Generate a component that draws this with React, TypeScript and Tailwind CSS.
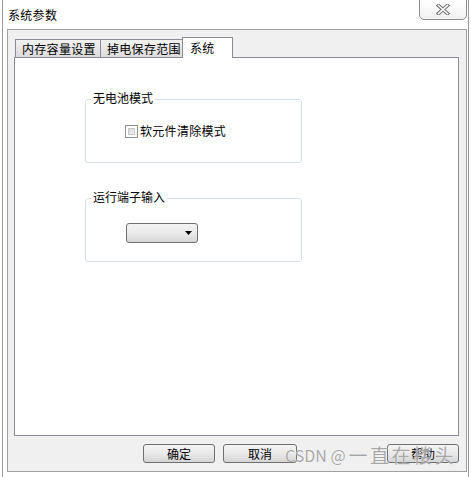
import React from "react";

const font = { fontFamily: '"Noto Sans CJK SC", "Liberation Sans", sans-serif' };

function CloseGlyph() {
  return (
    <svg width="14" height="11" viewBox="0 0 14 11">
      <path d="M2.5 1.5 L11.5 9.5 M11.5 1.5 L2.5 9.5" stroke="#6d6d6d" strokeWidth="3.6" strokeLinecap="square" fill="none" />
      <path d="M2.5 1.5 L11.5 9.5 M11.5 1.5 L2.5 9.5" stroke="#ffffff" strokeWidth="1.6" strokeLinecap="square" fill="none" />
    </svg>
  );
}

function Tab({ label, active, w }: { label: string; active?: boolean; w: string }) {
  if (active) {
    return (
      <div className={`${w} h-[21px] -mb-px relative z-10 border border-b-0 border-[#898c95] bg-white pl-[7px] pt-[1px] leading-[18px]`}>
        {label}
      </div>
    );
  }
  return (
    <div className={`${w} h-[18px] border border-b-0 border-[#898c95] bg-gradient-to-b from-[#f2f2f2] to-[#dcdcdc] pl-[6px] leading-[17px]`}>
      {label}
    </div>
  );
}

function GroupBox({ label, children }: { label: string; children: React.ReactNode }) {
  return (
    <div className="relative w-[217px] h-[64px] border border-[#d5dfe5] rounded-[3px]">
      <div className="absolute left-[5px] -top-[10px] bg-white px-[2px] leading-[16px]">{label}</div>
      {children}
    </div>
  );
}

function Button({ label, w }: { label: string; w: string }) {
  return (
    <div className={`${w} h-[19px] border border-[#707070] rounded-[3px] bg-gradient-to-b from-[#f4f4f4] via-[#e9e9e9] to-[#d5d5d5] flex items-center justify-center leading-none`}>
      {label}
    </div>
  );
}

export default function App() {
  return (
    <div className="relative w-[471px] h-[477px] bg-white overflow-hidden text-[12px] text-black" style={font}>
      <div className="ml-[2px] w-[467px] h-[477px] border-l border-r border-[#9a9a9a] flex flex-col">
        {/* title bar */}
        <div className="h-[29px] flex items-start justify-between">
          <div className="pl-[5px] pt-[7px] tracking-[0.3px] leading-[16px]">系统参数</div>
          <div className="mr-[1px] -mt-px w-[48px] h-[21px] border border-[#8c8c8c] rounded-b-[5px] bg-gradient-to-b from-white to-[#f1f1f1] flex items-center justify-center">
            <CloseGlyph />
          </div>
        </div>

        {/* client area */}
        <div className="ml-[4px] mr-[1px] h-[443px] border border-[#a0a0a0] bg-[#f0f0f0] flex flex-col">
          <div className="pt-[6px] pl-[6px] pr-[7px]">
            <div className="flex items-end h-[21px] pl-px tracking-[0.3px]">
              <Tab label="内存容量设置" w="w-[86px]" />
              <Tab label="掉电保存范围" w="w-[83px] -ml-px" />
              <Tab label="系统" active w="w-[51px] -ml-px" />
            </div>
            <div className="h-[379px] border border-[#898c95] bg-white pl-[70px] pt-[41px] flex flex-col gap-[35px]">
              <GroupBox label="无电池模式">
                <div className="flex items-center pl-[39px] pt-[24px] gap-[2px]">
                  <div className="w-[13px] h-[13px] border border-[#8f8f8f] bg-white p-[2px]">
                    <div className="w-full h-full bg-gradient-to-br from-[#d8d8d8] to-[#f4f4f4] border border-[#c8c8c8]" />
                  </div>
                  <span className="leading-[14px] tracking-[0.3px]">软元件清除模式</span>
                </div>
              </GroupBox>
              <GroupBox label="运行端子输入">
                <div className="pl-[40px] pt-[24px]">
                  <div className="w-[72px] h-[20px] border border-[#707070] rounded-[3px] bg-gradient-to-b from-[#f3f3f3] via-[#ebebeb] to-[#d7d7d7] flex items-center justify-end pr-[5px]">
                    <svg width="7" height="4" viewBox="0 0 7 4">
                      <path d="M0 0 H7 L3.5 4 Z" fill="#000" />
                    </svg>
                  </div>
                </div>
              </GroupBox>
            </div>
          </div>

          {/* buttons */}
          <div className="flex pt-[8px] pl-[135px] pr-[7px]">
            <Button label="确定" w="w-[72px]" />
            <Button label="取消" w="w-[74px] ml-[8px]" />
            <Button label="帮助" w="w-[72px] ml-auto" />
          </div>
        </div>
      </div>

      {/* watermark */}
      <div className="absolute left-[285px] top-[444px] flex items-center h-[22px] text-[#8a8a8a]/75 whitespace-nowrap" style={{ textShadow: "0 0 1px #fff" }}>
        <span className="text-[16px] leading-[22px]">CSDN @</span>
        <span className="text-[19px] leading-[22px] tracking-[2.5px] ml-[3px]">一直在楼头</span>
      </div>
    </div>
  );
}
